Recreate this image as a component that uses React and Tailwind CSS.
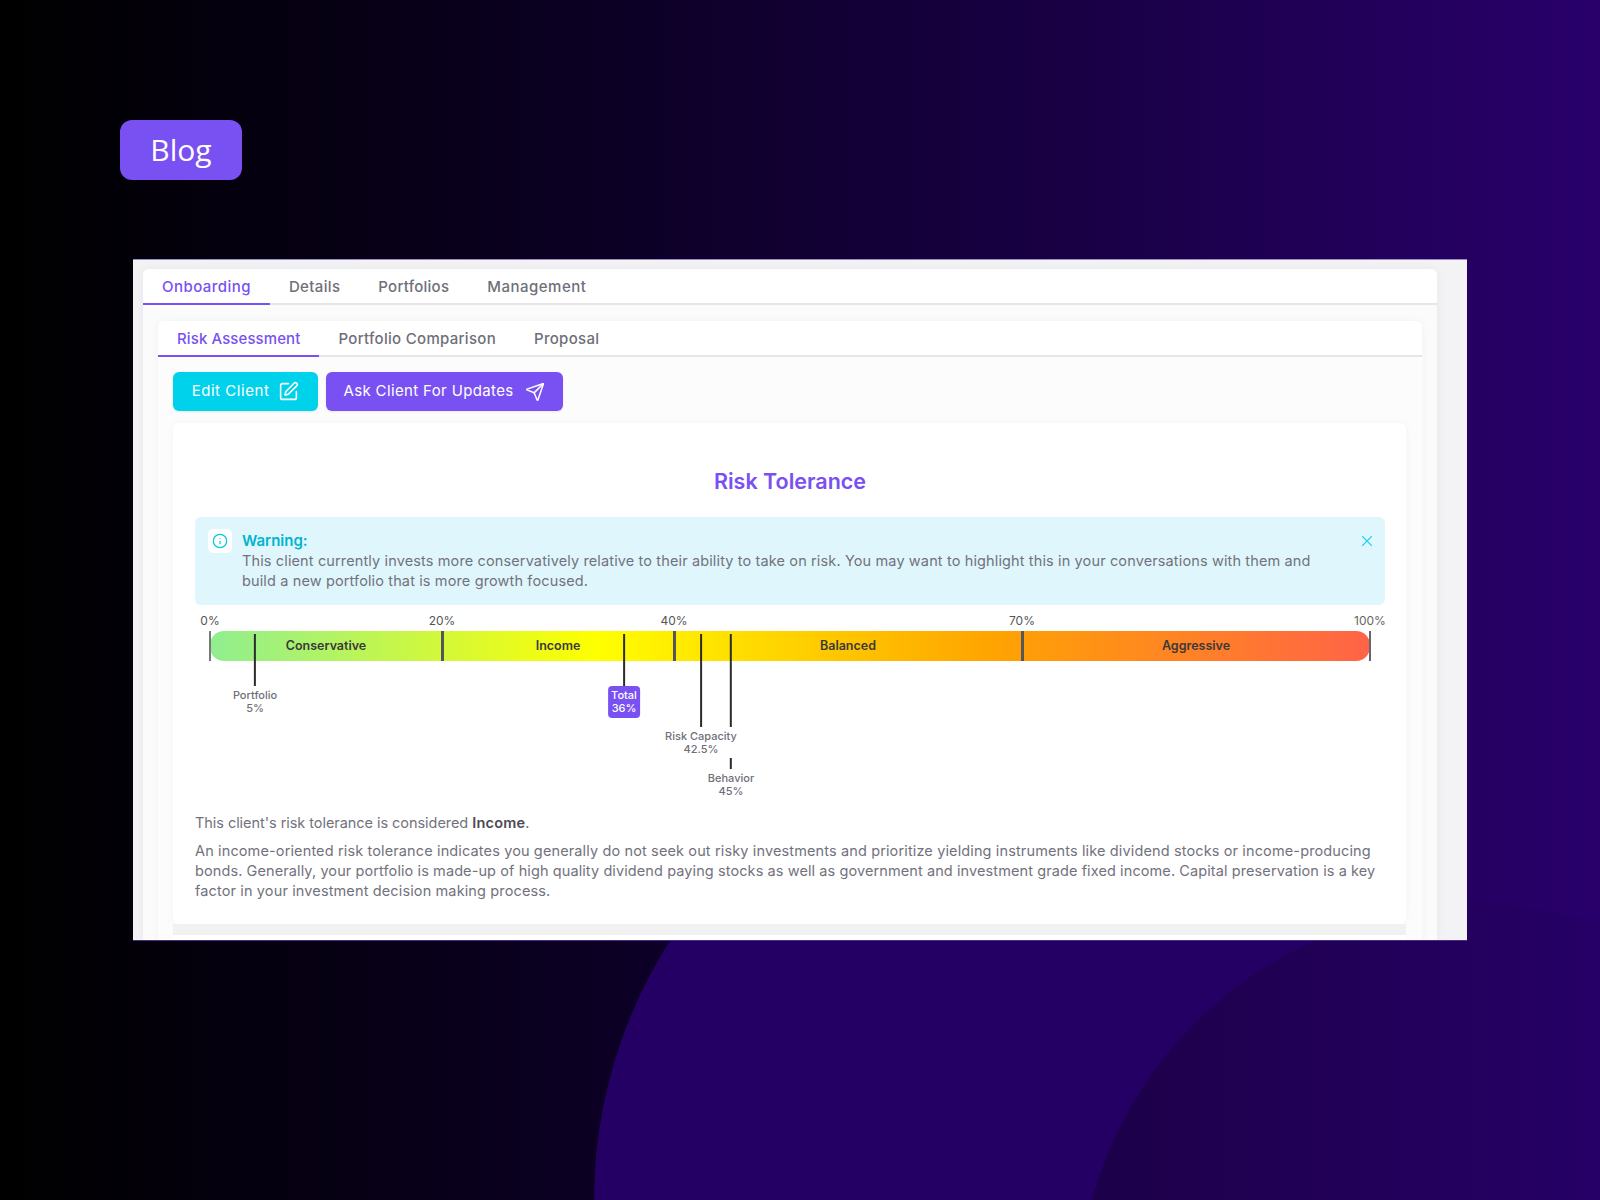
import React from "react";
import { SquarePen, Send, Info, X } from "lucide-react";

const font = { fontFamily: '"Inter", "Liberation Sans", sans-serif' };

function Tab({ label, active, track }) {
  return (
    <div className={"px-[19px] h-[36px] pt-[2px] flex items-center text-[15px] font-medium border-b-2 " + track + " " + (active ? "text-[#7950f2] border-[#7950f2]" : "text-[#6f6f7a] border-transparent")}>
      {label}
    </div>
  );
}

function Segment({ label, pct, className, first, last }) {
  return (
    <div className={"relative flex items-center justify-center text-[12.5px] font-semibold text-[#3a3a3a] " + className}>
      <span className={"absolute left-[-1px] top-0 bottom-0 " + (first ? "w-[2px] bg-[#77777c]" : "w-[3px] bg-[#55555a]")} />
      <span className="absolute left-0 -translate-x-1/2 top-[-18px] text-[12px] leading-[16px] font-normal text-[#555]">{pct}</span>
      {last && <span className="absolute right-[-1px] top-0 bottom-0 w-[2px] bg-[#66666a]" />}
      {last && <span className="absolute right-0 translate-x-1/2 top-[-18px] text-[12px] leading-[16px] font-normal text-[#666]">100%</span>}
      {label}
    </div>
  );
}

function Marker({ x, h, label, value, gap, boxed }) {
  return (
    <div className="absolute top-[29px] flex flex-col items-center -translate-x-1/2" style={{ left: x }}>
      <div className="w-[2px] bg-[#2b2b2b]" style={{ height: h }} />
      {gap && <div className="h-[31px]" />}
      {gap && <div className="w-[2px] h-[11px] bg-[#2b2b2b]" />}
      <div className={"text-[11px] leading-[13px] text-center whitespace-nowrap font-medium " + (boxed ? "bg-[#7950f2] text-white rounded-[4px] px-[3px] py-[3px]" : "text-[#6f6f7a] pt-[3px]")}>
        {label}
        <br />
        {value}
      </div>
    </div>
  );
}

export default function App() {
  return (
    <div className="relative w-[1600px] h-[1200px] overflow-hidden bg-[linear-gradient(to_right,#000000_0%,#0b0022_36%,#1a0048_70%,#29006b_100%)]" style={font}>
      <div className="absolute left-[594px] top-[720px] w-[960px] h-[960px] rounded-full bg-[#250064]" />
      <div className="absolute left-[1077px] top-[905px] w-[806px] h-[806px] rounded-full bg-[linear-gradient(to_right,#1c0048,#260066_65%)]" />

      <div className="relative pt-[120px] pl-[120px]">
        <div className="w-[122px] h-[60px] pb-[2px] rounded-[12px] bg-[#7950f2] flex items-center justify-center text-white text-[30px]" style={{ fontFamily: '"Open Sans", sans-serif' }}>
          Blog
        </div>

        <div className="mt-[79px] ml-[13px] w-[1334px] h-[682px] overflow-hidden bg-[#f3f3f6] border-t border-b border-t-[#9a8cc4] border-b-[#4a2e85] px-[10px] pt-[9px]">
          <div className="w-[1294px] h-full bg-[#fbfbfc] rounded-t-[6px] shadow-[0_0_12px_rgba(0,0,0,0.05)]">
            <div className="bg-white rounded-t-[6px] border-b-2 border-[#e6e6e8] h-[36px] flex">
              <Tab label="Onboarding" active track="tracking-[0.45px]" />
              <Tab label="Details" track="tracking-[0.35px]" />
              <Tab label="Portfolios" track="tracking-[0.25px]" />
              <Tab label="Management" track="tracking-[0.5px]" />
            </div>
            <div className="mx-[15px] mt-[16px] h-[700px] bg-[#fcfcfd] rounded-t-[6px] shadow-[0_0_10px_rgba(0,0,0,0.04)]">
              <div className="bg-white rounded-t-[6px] border-b-2 border-[#e6e6e8] h-[36px] flex">
                <Tab label="Risk Assessment" active track="tracking-[0.1px]" />
                <Tab label="Portfolio Comparison" track="tracking-[0.3px]" />
                <Tab label="Proposal" track="tracking-[0.3px]" />
              </div>
              <div className="px-[15px] pt-[15px]">
                <div className="flex gap-[7.5px]">
                  <button className="h-[39px] w-[145px] rounded-[6px] bg-[#00d2eb] text-white text-[15px] font-normal tracking-[0.55px] flex items-center justify-center gap-[9px] shadow-[0_1px_3px_rgba(0,0,0,0.08)]">
                    Edit Client <SquarePen size={21} strokeWidth={1.8} />
                  </button>
                  <button className="h-[39px] w-[237px] rounded-[6px] bg-[#7950f2] text-white text-[15px] font-normal tracking-[0.36px] flex items-center justify-center gap-[11px] shadow-[0_1px_3px_rgba(0,0,0,0.08)]">
                    Ask Client For Updates <Send size={20} strokeWidth={1.8} />
                  </button>
                </div>
                <div className="mt-[12px] w-[1233px] h-[501px] bg-white rounded-[6px] pl-[22px] pr-[21px] pt-[43px] shadow-[0_0_10px_rgba(0,0,0,0.04)]">
                  <h1 className="text-center text-[21.5px] leading-[30px] font-semibold text-[#7950f2]">Risk Tolerance</h1>
                  <div className="mt-[21px] h-[88px] rounded-[6px] bg-[#dff7fc] flex pl-[13px] pr-[9px] pt-[12px]">
                    <div className="w-[24px] h-[24px] rounded-[5px] bg-white flex items-center justify-center text-[#00c8e0] shrink-0">
                      <Info size={16} strokeWidth={1.8} />
                    </div>
                    <div className="ml-[10px] flex-1 text-[14.5px] leading-[20px] tracking-[0.13px] text-[#72727d]">
                      <div className="text-[#00b5cc] text-[15px] tracking-normal font-semibold leading-[24px]">Warning:</div>
                      <div className="-mt-[2px]">
                        This client currently invests more conservatively relative to their ability to take on risk. You may want to highlight this in your conversations with them and
                        <br />
                        build a new portfolio that is more growth focused.
                      </div>
                    </div>
                    <X size={18} strokeWidth={1.5} className="text-[#22d3ee] mt-[3px]" />
                  </div>
                  <div className="relative h-[208px]">
                    <div className="absolute left-[15px] top-[26px] w-[1160px] h-[30px] rounded-[14px] flex bg-[linear-gradient(to_right,#90ee90,#ffff00,#ffa500,#ff6347)]">
                      <Segment label="Conservative" pct="0%" className="w-[232px]" first />
                      <Segment label="Income" pct="20%" className="w-[232px]" />
                      <Segment label="Balanced" pct="40%" className="w-[348px]" />
                      <Segment label="Aggressive" pct="70%" className="w-[348px]" last />
                    </div>
                    <Marker x={60} h={52} label="Portfolio" value="5%" />
                    <Marker x={429} h={52} label="Total" value="36%" boxed />
                    <Marker x={506} h={93} label="Risk Capacity" value="42.5%" />
                    <Marker x={536} h={93} label="Behavior" value="45%" gap />
                  </div>
                  <div className="text-[14.5px] leading-[20px] tracking-[0.13px] text-[#72727d]">
                    <p className="tracking-[-0.05px]">This client's risk tolerance is considered <b className="font-semibold tracking-[0.2px] text-[#4a4a55]">Income</b>.</p>
                    <p className="mt-[8px]">
                      An income-oriented risk tolerance indicates you generally do not seek out risky investments and prioritize yielding instruments like dividend stocks or income-producing
                      <br />
                      <span className="tracking-[0.095px]">bonds. Generally, your portfolio is made-up of high quality dividend paying stocks as well as government and investment grade fixed income. Capital preservation is a key</span>
                      <br />
                      factor in your investment decision making process.
                    </p>
                  </div>
                </div>
                <div className="h-[11px] w-[1233px] bg-[#f1f1f1]" />
                <div className="h-[40px] w-[1233px] bg-white" />
              </div>
            </div>
          </div>
        </div>
      </div>
    </div>
  );
}
